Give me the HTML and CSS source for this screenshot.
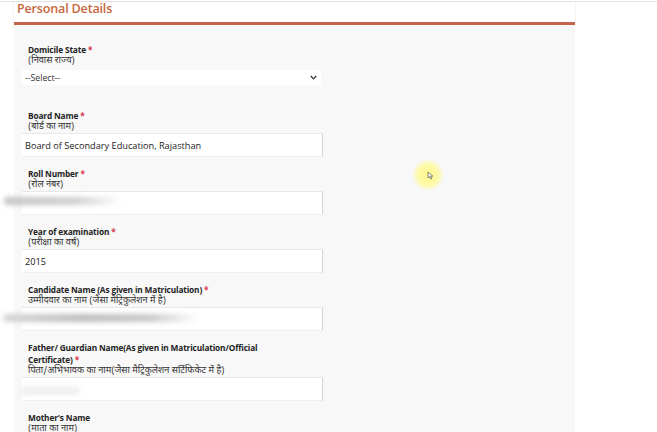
FILE: index.html
```html
<!DOCTYPE html>
<html lang="en">
<head>
<meta charset="utf-8">
<title>Personal Details</title>
<link rel="stylesheet" href="styles.css">
</head>
<body>
<div class="topline"></div>
<section class="panel">
  <h2 class="panel-title">Personal Details</h2>
  <div class="panel-body">
    <div class="field">
      <label class="label">Domicile State <span class="req">*</span></label>
      <div class="hint">(निवास राज्य)</div>
      <div class="select">
        <span>--Select--</span>
        <svg class="chev" width="7" height="5" viewBox="0 0 7 5"><path d="M0.8 1 L3.5 3.8 L6.2 1" fill="none" stroke="#333" stroke-width="1.2"/></svg>
      </div>
    </div>
    <div class="field">
      <label class="label">Board Name <span class="req">*</span></label>
      <div class="hint">(बोर्ड का नाम)</div>
      <div class="input">Board of Secondary Education, Rajasthan</div>
    </div>
    <div class="field">
      <label class="label">Roll Number <span class="req">*</span></label>
      <div class="hint">(रोल नंबर)</div>
      <div class="input"></div>
    </div>
    <div class="field">
      <label class="label">Year of examination <span class="req">*</span></label>
      <div class="hint">(परीक्षा का वर्ष)</div>
      <div class="input">2015</div>
    </div>
    <div class="field">
      <label class="label">Candidate Name (As given in Matriculation) <span class="req">*</span></label>
      <div class="hint">उम्मीदवार का नाम (जैसा मैट्रिकुलेशन में है)</div>
      <div class="input"></div>
    </div>
    <div class="field">
      <label class="label wrap">Father/ Guardian Name(As given in Matriculation/Official Certificate) <span class="req">*</span></label>
      <div class="hint">पिता/अभिभावक का नाम(जैसा मैट्रिकुलेशन सर्टिफिकेट में है)</div>
      <div class="input"></div>
    </div>
    <div class="field">
      <label class="label">Mother's Name</label>
      <div class="hint">(माता का नाम)</div>
      <div class="input"></div>
    </div>
  </div>
</section>
<div class="smear smear-roll"></div>
<div class="smear smear-cand"></div>
<div class="smear smear-father"></div>
<div class="cursor-hl">
  <svg class="arrow" width="7" height="9" viewBox="0 0 7 9"><path d="M1 1 L1 7 L2.6 5.6 L3.8 8 L4.8 7.5 L3.7 5.2 L5.8 5.1 Z" fill="#fff" stroke="#555" stroke-width="0.7"/></svg>
</div>
</body>
</html>
```
FILE: styles.css
```css
html, body {
  margin: 0;
  padding: 0;
  background: #ffffff;
  font-family: "Open Sans", "Noto Sans", "Noto Sans Devanagari", sans-serif;
  color: #333;
  overflow: hidden;
}

.topline {
  height: 1px;
  margin-top: 1px;
  background: #e3e3e3;
}

.panel {
  width: 561px;
  margin-left: 14px;
}

.panel-title {
  margin: 0;
  height: 20px;
  padding-left: 3px;
  font-size: 12.6px;
  line-height: 13px;
  font-weight: 600;
  letter-spacing: -0.2px;
  color: #c6683d;
  border-bottom: 3px solid #c4644c;
  box-shadow: 0 1px 2px rgba(230, 150, 130, 0.35);
}

.panel-body {
  background: #f8f8f8;
  padding: 19px 0 0 8px;
  min-height: 420px;
}

.field {
  display: flex;
  flex-direction: column;
  margin-bottom: 11px;
}

.label {
  padding-left: 6px;
  font-size: 8.3px;
  line-height: 12px;
  font-weight: 700;
  letter-spacing: -0.15px;
  color: #222;
}

.label.wrap {
  max-width: 236px;
}

.req {
  color: #d9364f;
}

.hint {
  height: 11px;
  padding-left: 6px;
  font-size: 9.2px;
  line-height: 11px;
  color: #333;
  white-space: nowrap;
  font-family: "Noto Sans Devanagari", "Noto Sans", "Open Sans", sans-serif;
}

.select {
  width: 292px;
  height: 15px;
  margin-top: 3px;
  margin-bottom: 14px;
  padding: 0 4px 0 3px;
  background: #fff;
  display: flex;
  align-items: center;
  justify-content: space-between;
  font-size: 8.7px;
  color: #333;
}

.input {
  width: 297px;
  height: 22px;
  padding-left: 3px;
  background: #fff;
  border-top: 1px solid #e8e8e8;
  border-bottom: 1px solid #efefef;
  border-right: 1px solid #d4d4d4;
  display: flex;
  align-items: center;
  font-size: 9.2px;
  color: #222;
}

.smear {
  position: absolute;
  height: 8px;
  filter: blur(2.5px);
  border-radius: 4px;
}

.smear-roll {
  left: 4px;
  top: 197px;
  width: 118px;
  background: linear-gradient(90deg, #c4c4c4, #cfcfcf 60%, rgba(220,220,220,0));
}

.smear-cand {
  left: 3px;
  top: 314px;
  width: 195px;
  background: linear-gradient(90deg, #d6d6d6, #bdbdbd 40%, #c8c8c8 75%, rgba(220,220,220,0));
}

.smear-father {
  left: 20px;
  top: 387px;
  width: 60px;
  background: rgba(235, 235, 235, 0.8);
}

.cursor-hl {
  position: absolute;
  left: 412px;
  top: 159px;
  width: 32px;
  height: 32px;
  border-radius: 50%;
  background: radial-gradient(circle, rgba(255, 248, 130, 0.95) 0%, rgba(255, 250, 150, 0.8) 45%, rgba(255, 252, 190, 0) 72%);
}

.arrow {
  position: absolute;
  left: 15px;
  top: 12px;
}
```
